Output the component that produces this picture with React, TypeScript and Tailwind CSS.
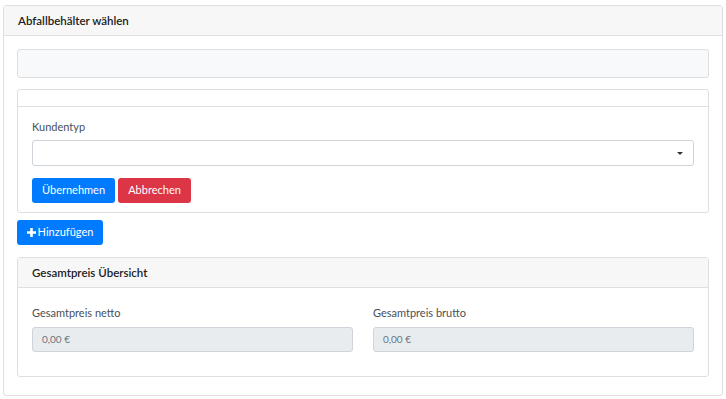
const font = { fontFamily: "Lato, 'Open Sans', sans-serif" };

const PriceField = ({ label }: { label: string }) => (
  <div className="flex flex-col">
    <label className="text-[11px] text-[#495057] leading-[14px] mb-[7px]">{label}</label>
    <div className="h-[25px] bg-[#e9ecef] border border-[#ced4da] rounded-[3px] flex items-center px-[9px] text-[10px] text-[#6c757d]">
      0,00 €
    </div>
  </div>
);

export default function App() {
  return (
    <div className="w-[726px] h-[399px] bg-white px-[3px] pt-[5px]" style={font}>
      <div className="border border-[#dfdfdf] rounded-[3px] bg-white">
        <div className="h-[30px] bg-[#f7f7f7] border-b border-[#dfdfdf] px-[14px] flex items-center text-[11.5px] font-semibold text-[#222]">
          Abfallbehälter wählen
        </div>
        <div className="px-[13px] pt-[13px] pb-[18px]">
          <div className="h-[29px] bg-[#f8f9fa] border border-[#dfdfdf] rounded-[3px]" />

          <div className="mt-[11px] border border-[#dfdfdf] rounded-[3px]">
            <div className="h-[17px] border-b border-[#dfdfdf]" />
            <div className="px-[14px] pt-[13px] pb-[9px]">
              <label className="block text-[11px] text-[#495057] leading-[14px] mb-[6px]">Kundentyp</label>
              <div className="h-[26px] border border-[#ced4da] rounded-[3px] flex items-center justify-end pr-[10px]">
                <svg width="6" height="3" viewBox="0 0 6 3">
                  <path d="M0 0h6L3 3z" fill="#333" />
                </svg>
              </div>
              <div className="mt-[12px] flex gap-[3px]">
                <button className="h-[25px] w-[83px] bg-[#007bff] text-white text-[11px] rounded-[3px]">Übernehmen</button>
                <button className="h-[25px] w-[73px] bg-[#dc3545] text-white text-[11px] rounded-[3px]">Abbrechen</button>
              </div>
            </div>
          </div>

          <button className="mt-[7px] h-[25px] w-[86px] bg-[#007bff] text-white text-[11px] rounded-[3px] flex items-center justify-center gap-[2px]">
            <svg width="9" height="9" viewBox="0 0 9 9">
              <path d="M3.2 0h2.6v3.2H9v2.6H5.8V9H3.2V5.8H0V3.2h3.2z" fill="#fff" />
            </svg>
            Hinzufügen
          </button>

          <div className="mt-[12px] border border-[#dfdfdf] rounded-[3px]">
            <div className="h-[30px] bg-[#f7f7f7] border-b border-[#dfdfdf] px-[14px] flex items-center text-[11.5px] font-semibold text-[#222]">
              Gesamtpreis Übersicht
            </div>
            <div className="px-[14px] pt-[18px] pb-[24px] grid grid-cols-2 gap-[20px]">
              <PriceField label="Gesamtpreis netto" />
              <PriceField label="Gesamtpreis brutto" />
            </div>
          </div>
        </div>
      </div>
    </div>
  );
}
